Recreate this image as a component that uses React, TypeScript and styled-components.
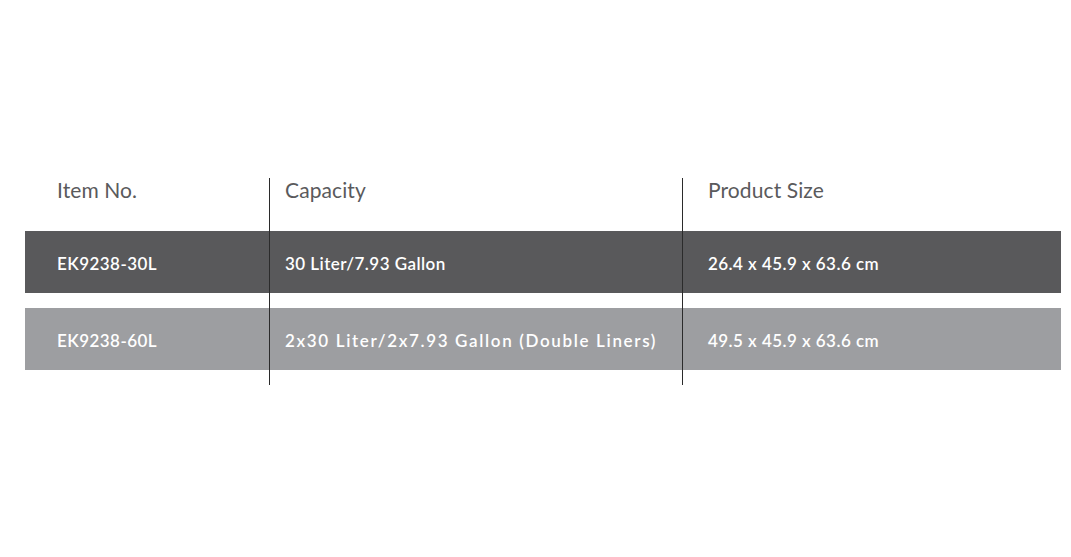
import styled, { createGlobalStyle } from "styled-components";

const GlobalStyle = createGlobalStyle`
  html, body {
    margin: 0;
    padding: 0;
    background: #ffffff;
  }
  body {
    font-family: "Lato", "Open Sans", sans-serif;
  }
`;

const Page = styled.div`
  width: 1071px;
  height: 557px;
  padding: 178px 10px 0 25px;
  box-sizing: border-box;
`;

const Table = styled.div`
  display: flex;
  flex-direction: column;
  width: 1036px;
`;

const Row = styled.div<{ bg?: string; h: number }>`
  display: grid;
  grid-template-columns: 244px 413px 1fr;
  height: ${(p) => p.h}px;
  background: ${(p) => p.bg || "transparent"};
`;

const Cell = styled.div<{ divider?: boolean; pad: number; head?: boolean }>`
  display: flex;
  align-items: ${(p) => (p.head ? "flex-start" : "center")};
  padding-left: ${(p) => p.pad}px;
  border-left: ${(p) => (p.divider ? "1px solid #2b2b2b" : "none")};
  box-sizing: border-box;
  white-space: nowrap;
`;

const HeadText = styled.span`
  font-size: 21px;
  color: #5a5a5c;
  line-height: 24px;
  margin-top: 0;
  letter-spacing: 0.1px;
`;

const CellText = styled.span<{ spaced?: boolean }>`
  font-size: 17px;
  font-weight: 600;
  color: #ffffff;
  letter-spacing: ${(p) => (p.spaced ? "1.65px" : "0.45px")};
  margin-top: 3px;
`;

const pads = [32, 15, 25];

const rows = [
  {
    bg: "#59595b",
    cells: ["EK9238-30L", "30 Liter/7.93 Gallon", "26.4 x 45.9 x 63.6 cm"],
  },
  {
    bg: "#9d9ea1",
    cells: [
      "EK9238-60L",
      "2x30 Liter/2x7.93 Gallon (Double Liners)",
      "49.5 x 45.9 x 63.6 cm",
    ],
    spaced: true,
  },
];

const Spacer = () => (
  <Row h={15}>
    {pads.map((p, i) => (
      <Cell key={i} pad={p} divider={i > 0} />
    ))}
  </Row>
);

export default function App() {
  return (
    <>
      <GlobalStyle />
      <Page>
        <Table>
          <Row h={53}>
            {["Item No.", "Capacity", "Product Size"].map((t, i) => (
              <Cell key={t} pad={pads[i]} divider={i > 0} head>
                <HeadText>{t}</HeadText>
              </Cell>
            ))}
          </Row>
          {rows.map((r) => (
            <div key={r.cells[0]}>
              <Row h={62} bg={r.bg}>
                {r.cells.map((c, i) => (
                  <Cell key={i} pad={pads[i]} divider={i > 0}>
                    <CellText spaced={r.spaced && i === 1}>{c}</CellText>
                  </Cell>
                ))}
              </Row>
              <Spacer />
            </div>
          ))}
        </Table>
      </Page>
    </>
  );
}
